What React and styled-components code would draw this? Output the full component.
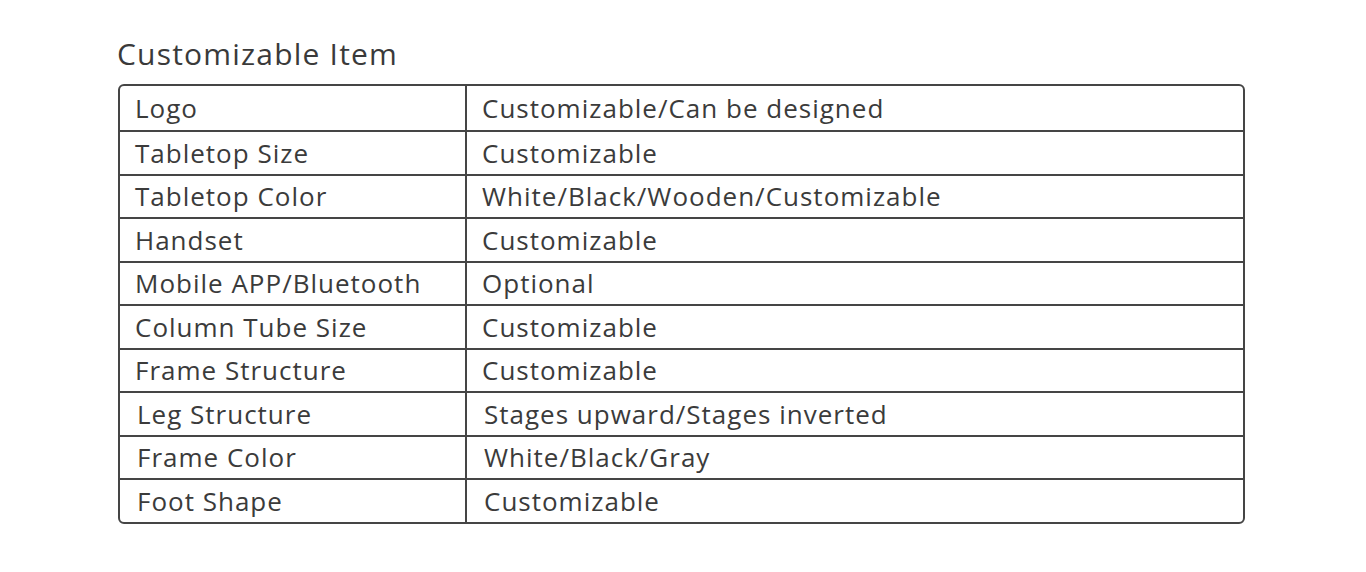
import styled, { createGlobalStyle } from "styled-components";

const GlobalStyle = createGlobalStyle`
  body {
    margin: 0;
    background: #ffffff;
    font-family: "Open Sans", Roboto, sans-serif;
    color: #3b3b3b;
  }
`;

const Page = styled.div`
  width: 1366px;
  height: 572px;
  padding: 34px 0 0 118px;
  box-sizing: border-box;
`;

const Title = styled.h2`
  margin: 0 0 10px -1px;
  font-size: 30px;
  font-weight: 500;
  letter-spacing: 1.2px;
  line-height: 40px;
  color: #3a3a3a;
`;

const Table = styled.div`
  width: 1127px;
  border: 2px solid #454545;
  border-radius: 6px;
  box-sizing: border-box;
`;

const Row = styled.div`
  display: grid;
  grid-template-columns: 347px 1fr;
  height: ${(p) => (p.first ? "44px" : "41.5px")};
  border-top: ${(p) => (p.first ? "none" : "2px solid #454545")};
`;

const Cell = styled.div`
  display: flex;
  align-items: center;
  padding-left: ${(p) => 15 + (p.shift || 0)}px;
  font-size: 26px;
  font-weight: 500;
  letter-spacing: 1px;
  color: #3b3b3b;
  white-space: nowrap;
  &:first-child {
    border-right: 2px solid #454545;
  }
`;

const rows = [
  ["Logo", "Customizable/Can be designed", 0],
  ["Tabletop Size", "Customizable", 0],
  ["Tabletop Color", "White/Black/Wooden/Customizable", 0],
  ["Handset", "Customizable", 0],
  ["Mobile APP/Bluetooth", "Optional", 0],
  ["Column Tube Size", "Customizable", 0],
  ["Frame Structure", "Customizable", 0],
  ["Leg Structure", "Stages upward/Stages inverted", 2],
  ["Frame Color", "White/Black/Gray", 2],
  ["Foot Shape", "Customizable", 2],
];

export default function App() {
  return (
    <>
      <GlobalStyle />
      <Page>
        <Title>Customizable Item</Title>
        <Table>
          {rows.map(([name, value, shift], i) => (
            <Row key={name} first={i === 0}>
              <Cell shift={shift}>{name}</Cell>
              <Cell shift={shift}>{value}</Cell>
            </Row>
          ))}
        </Table>
      </Page>
    </>
  );
}
